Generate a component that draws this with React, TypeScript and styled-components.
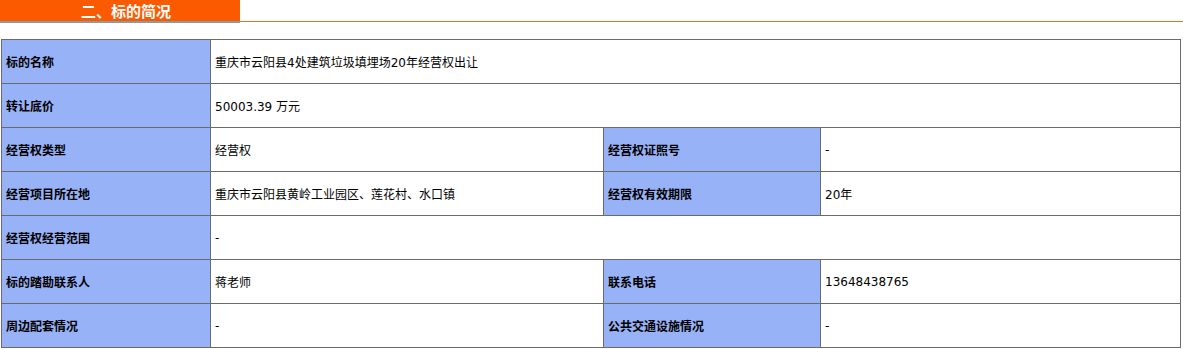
import React from "react";
import styled, { createGlobalStyle } from "styled-components";

const GlobalStyle = createGlobalStyle`
  html, body {
    margin: 0;
    padding: 0;
    background: #ffffff;
  }
  body {
    font-family: "DejaVu Sans", "Noto Sans CJK SC", sans-serif;
    font-size: 12px;
    color: #000;
  }
`;

const Page = styled.div`
  width: 1183px;
`;

const SectionHeader = styled.div`
  display: flex;
  align-items: flex-start;
  height: 23px;
`;

const SectionTab = styled.div`
  width: 240px;
  height: 21px;
  background: #fb5a00;
  box-shadow: 0 2px 0 #8f9aa0;
  color: #ffffff;
  font-family: "Noto Sans CJK SC", sans-serif;
  font-weight: bold;
  font-size: 15px;
  line-height: 21px;
  padding-left: 81px;
  box-sizing: border-box;
`;

const SectionRule = styled.div`
  flex: 1;
  margin-top: 21px;
  height: 1px;
  background: #e0742a;
`;

const InfoGrid = styled.div`
  margin: 16px 0 0 1px;
  display: grid;
  grid-template-columns: 208px 392px 216px 359px;
  grid-auto-rows: 43px;
  gap: 1px;
  padding: 1px;
  width: fit-content;
  background: #6b6b6b;
`;

const Cell = styled.div<{ $span?: number }>`
  display: flex;
  align-items: center;
  padding-left: 4px;
  font-size: 12px;
  white-space: nowrap;
  grid-column: ${(p) => (p.$span ? `span ${p.$span}` : "auto")};
`;

const LabelCell = styled(Cell)`
  background: #98b2f7;
  font-family: "Noto Sans CJK SC", sans-serif;
  font-weight: bold;
`;

const ValueCell = styled(Cell)`
  background: #ffffff;
  font-family: "DejaVu Sans", "Noto Sans CJK SC", sans-serif;
`;

type Row =
  | { kind: "wide"; label: string; value: string }
  | { kind: "pair"; label: string; value: string; label2: string; value2: string };

const rows: Row[] = [
  { kind: "wide", label: "标的名称", value: "重庆市云阳县4处建筑垃圾填埋场20年经营权出让" },
  { kind: "wide", label: "转让底价", value: "50003.39 万元" },
  { kind: "pair", label: "经营权类型", value: "经营权", label2: "经营权证照号", value2: "-" },
  {
    kind: "pair",
    label: "经营项目所在地",
    value: "重庆市云阳县黄岭工业园区、莲花村、水口镇",
    label2: "经营权有效期限",
    value2: "20年",
  },
  { kind: "wide", label: "经营权经营范围", value: "-" },
  { kind: "pair", label: "标的踏勘联系人", value: "蒋老师", label2: "联系电话", value2: "13648438765" },
  { kind: "pair", label: "周边配套情况", value: "-", label2: "公共交通设施情况", value2: "-" },
];

export default function App() {
  return (
    <Page>
      <GlobalStyle />
      <SectionHeader>
        <SectionTab>二、标的简况</SectionTab>
        <SectionRule />
      </SectionHeader>
      <InfoGrid>
        {rows.map((r) =>
          r.kind === "wide" ? (
            <React.Fragment key={r.label}>
              <LabelCell>{r.label}</LabelCell>
              <ValueCell $span={3}>{r.value}</ValueCell>
            </React.Fragment>
          ) : (
            <React.Fragment key={r.label}>
              <LabelCell>{r.label}</LabelCell>
              <ValueCell>{r.value}</ValueCell>
              <LabelCell>{r.label2}</LabelCell>
              <ValueCell>{r.value2}</ValueCell>
            </React.Fragment>
          )
        )}
      </InfoGrid>
    </Page>
  );
}
